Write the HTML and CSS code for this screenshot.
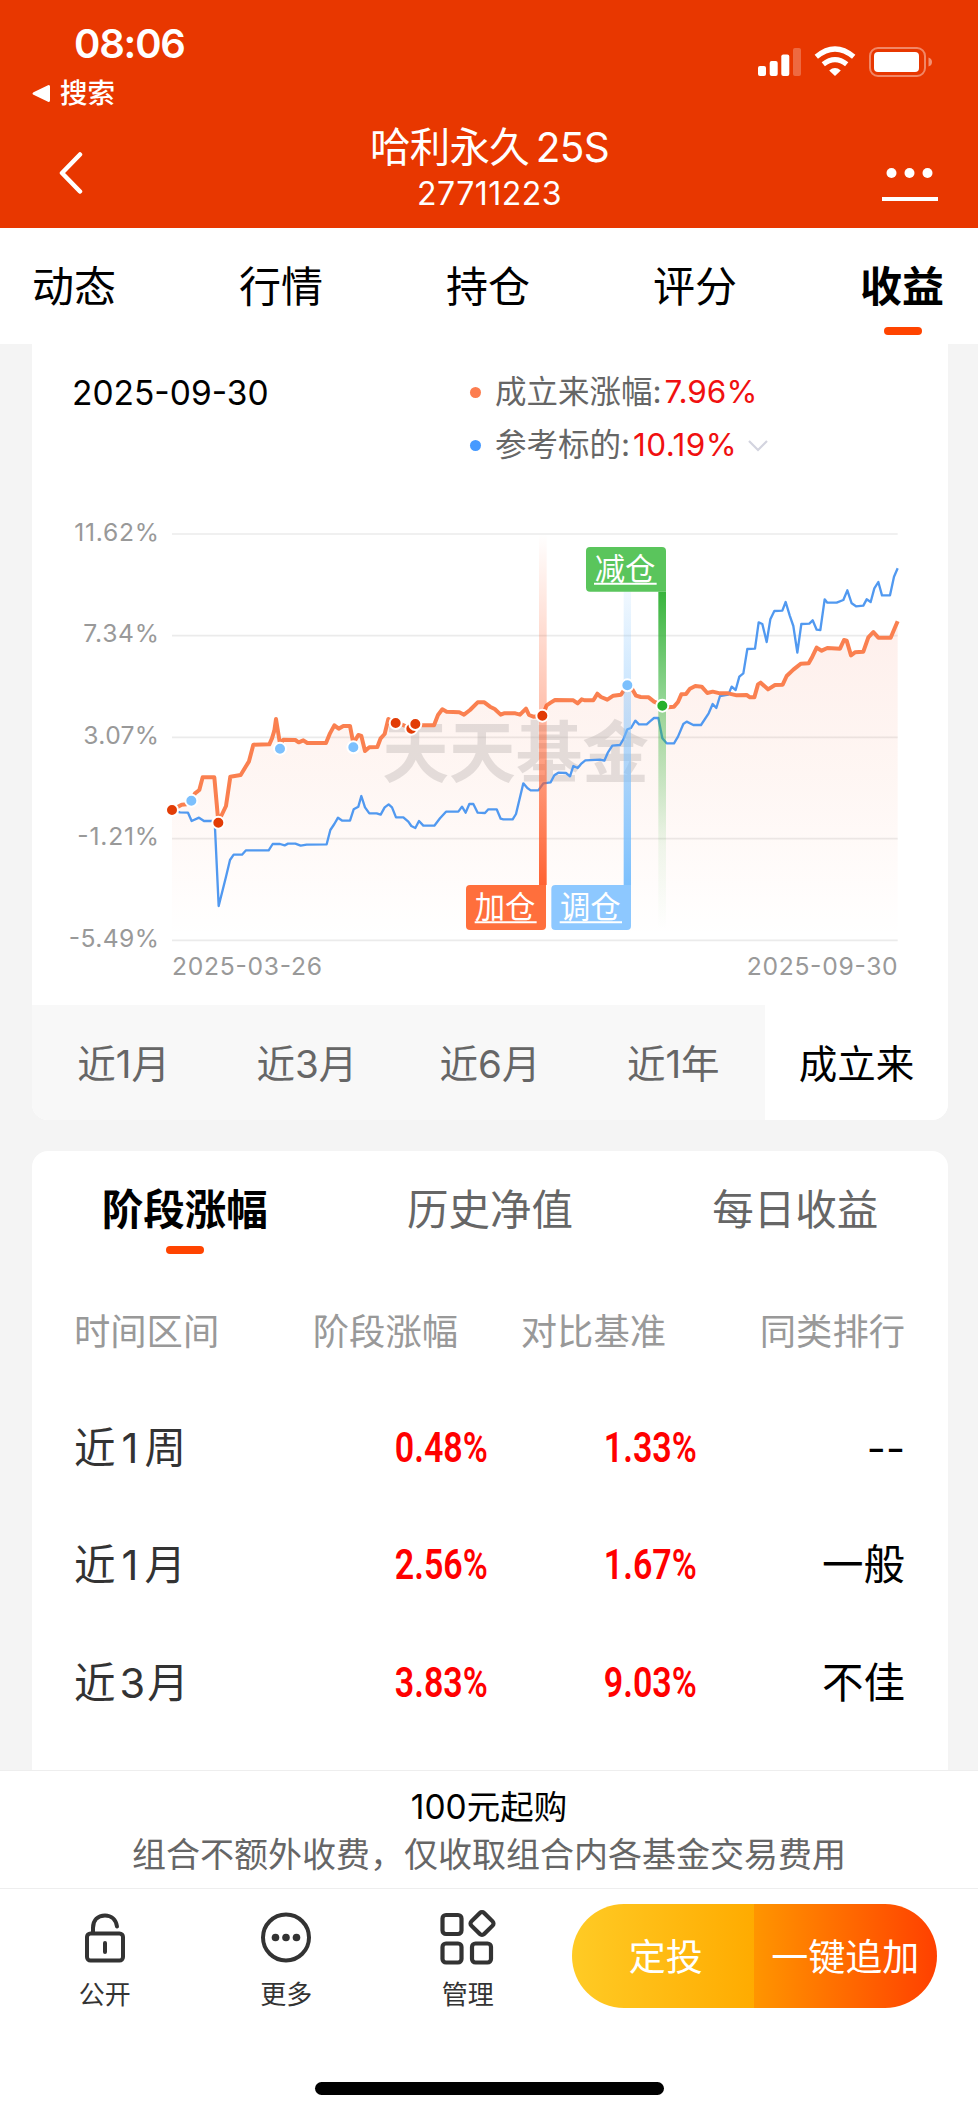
FILE: index.html
```html
<!DOCTYPE html>
<html lang="zh-CN">
<head>
    <meta charset="UTF-8">
    <meta name="viewport" content="width=device-width, initial-scale=1.0">
    <title>哈利永久 25S</title>
    <link rel="stylesheet" href="styles.css">
</head>
<body>
    <header class="header">
        <div class="status">
            <div class="status-left">
                <div class="time">08:06</div>
                <div class="back-app">
                    <svg width="19" height="19" viewBox="0 0 19 19"><path d="M1.5 8.2 16 1.2q2-.8 2 1.3v14q0 2-2 1.3L1.5 10.8q-2-1.3 0-2.6z" fill="#fff"/></svg>
                    <span>搜索</span>
                </div>
            </div>
            <svg class="status-icons" width="176" height="32" viewBox="757 45 176 32">
                <g fill="#fff">
                    <rect x="758" y="66" width="8" height="10" rx="2"/>
                    <rect x="769.7" y="61" width="8" height="15" rx="2"/>
                    <rect x="781.3" y="54.5" width="8" height="21.5" rx="2"/>
                    <rect x="793" y="48" width="8" height="28" rx="2" opacity=".25"/>
                    <path d="M835 76l-5.8-5.6q5.8-4.6 11.6 0z"/>
                </g>
                <g fill="none" stroke="#fff" stroke-width="5.2">
                    <path d="M816.3 56.8q18.7-15.6 37.4 0"/>
                    <path d="M823.3 64.3q11.7-9.4 23.4 0"/>
                </g>
                <rect x="870" y="48" width="55" height="28" rx="8" fill="none" stroke="#fff" stroke-width="2" opacity=".4"/>
                <rect x="874" y="52" width="45" height="20" rx="4" fill="#fff"/>
                <path d="M928.5 57.5q3.5 1 3.5 4.5t-3.5 4.5z" fill="#fff" opacity=".45"/>
            </svg>
        </div>
        <div class="nav">
            <svg class="nav-back" width="26" height="44" viewBox="0 0 26 44"><path d="M21 3.5 3 22l18 18.5" fill="none" stroke="#fff" stroke-width="4.5" stroke-linecap="round" stroke-linejoin="round"/></svg>
            <div class="nav-title">
                <div class="title">哈利永久 25S</div>
                <div class="code">27711223</div>
            </div>
            <svg class="nav-more" width="56" height="36" viewBox="0 0 56 36" fill="#fff">
                <circle cx="9.5" cy="7" r="5"/>
                <circle cx="27.5" cy="7" r="5"/>
                <circle cx="45.5" cy="7" r="5"/>
                <rect x="0" y="31" width="56" height="4"/>
            </svg>
        </div>
    </header>

    <nav class="tabs">
        <div class="tab">动态</div>
        <div class="tab">行情</div>
        <div class="tab">持仓</div>
        <div class="tab">评分</div>
        <div class="tab active">收益</div>
    </nav>

    <main class="content">
        <section class="card chart-card">
            <div class="info">
                <div class="date">2025-09-30</div>
                <div class="legend">
                    <div class="legend-row"><i class="dot orange"></i><span>成立来涨幅:</span><b>7.96%</b></div>
                    <div class="legend-row"><i class="dot blue"></i><span>参考标的:</span><b class="ref">10.19%</b>
                        <svg width="20" height="12" viewBox="0 0 20 12"><path d="M1 1l9 9 9-9" fill="none" stroke="#d3d4df" stroke-width="2.2"/></svg>
                    </div>
                </div>
            </div>
            <!-- chart units are a third of a pixel -->
            <svg class="chart" width="915" height="485" viewBox="-354 -60 2745 1455">
                <defs>
                    <linearGradient id="area" x1="0" y1="0" x2="0" y2="1">
                        <stop offset="0" stop-color="#f4502a" stop-opacity=".09"/>
                        <stop offset=".5" stop-color="#f4602a" stop-opacity=".055"/>
                        <stop offset="1" stop-color="#ff5a28" stop-opacity="0"/>
                    </linearGradient>
                    <linearGradient id="add" x1="0" y1="0" x2="0" y2="1">
                        <stop offset="0" stop-color="#ff5a28" stop-opacity="0"/>
                        <stop offset=".5" stop-color="#ff5a28" stop-opacity=".38"/>
                        <stop offset="1" stop-color="#ff5a28" stop-opacity=".95"/>
                    </linearGradient>
                    <linearGradient id="move" x1="0" y1="0" x2="0" y2="1">
                        <stop offset="0" stop-color="#7cc0fd" stop-opacity=".05"/>
                        <stop offset=".5" stop-color="#7cc0fd" stop-opacity=".5"/>
                        <stop offset="1" stop-color="#7cc0fd"/>
                    </linearGradient>
                    <linearGradient id="cut" x1="0" y1="0" x2="0" y2="1">
                        <stop offset="0" stop-color="#38b43c"/>
                        <stop offset=".35" stop-color="#38b43c" stop-opacity=".5"/>
                        <stop offset=".75" stop-color="#38b43c" stop-opacity=".08"/>
                        <stop offset="1" stop-color="#38b43c" stop-opacity="0"/>
                    </linearGradient>
                </defs>
                <g stroke="#ebebeb" stroke-width="5">
                    <path d="M66 42H2243M66 347H2243M66 652H2243M66 956H2243M66 1261H2243"/>
                </g>
                <g class="axis">
                    <text x="-227" y="62" textLength="254">11.62%</text>
                    <text x="-200" y="367" textLength="227">7.34%</text>
                    <text x="-200" y="672" textLength="227">3.07%</text>
                    <text x="-218" y="976" textLength="245">-1.21%</text>
                    <text x="-244" y="1281" textLength="271">-5.49%</text>
                    <text x="66" y="1364" textLength="450">2025-03-26</text>
                    <text x="1790" y="1364" textLength="453">2025-09-30</text>
                </g>
                <path fill="url(#area)" d="M66 1250V870L95 854 124 841 148 810 158 772 193 772 205 906 228 858 241 770 272 765 297 724 310 674 358 673 380 596 390 672 400 659 436 660 528 669 553 616 600 618 610 670 634 648 645 693 682 681 704 642 715 597 737 608 784 626 852 616 877 568 942 584 983 547 1003 547 1052 584 1110 584 1128 566 1142 588 1178 587 1190 556 1215 540 1330 541 1342 521 1372 539 1413 524 1432 496 1458 527 1496 532 1537 556 1572 560 1594 523 1608 522 1636 498 1655 500 1672 519 1800 532 1813 532 1832 488 1854 508 1898 494 1930 449 1976 430 2000 383 2070 386 2090 362 2103 406 2140 395 2170 336 2185 353 2222 353 2243 304V1250z"/>
                <text class="watermark" x="697" y="770" textLength="800">天天基金</text>
                <polyline class="line-ref" points="66,870 90,877 114,878 125,903 147,893 162,903 194,903 206,1158 228,1070 240,1020 251,1004 276,1004 288,991 356,991 368,972 390,972 404,976 414,971 436,971 452,977 470,974 530,973 541,930 553,912 564,893 577,902 600,902 611,868 625,860 634,828 645,862 658,880 680,880 692,884 704,862 716,853 726,862 738,892 760,892 775,905 784,918 796,924 807,903 820,917 853,917 870,895 888,875 925,875 936,860 947,878 958,852 970,852 983,878 1005,879 1015,868 1040,868 1052,896 1060,898 1088,898 1098,882 1108,840 1120,790 1132,804 1142,811 1165,811 1180,790 1202,787 1213,766 1225,758 1248,759 1260,769 1270,738 1283,744 1295,730 1306,721 1350,719 1363,722 1374,697 1387,677 1410,675 1420,658 1432,628 1443,624 1456,602 1467,613 1490,613 1500,604 1512,594 1525,594 1537,655 1550,670 1572,670 1584,650 1600,612 1610,605 1630,615 1653,615 1676,580 1688,552 1699,564 1710,528 1735,524 1745,500 1757,510 1768,470 1780,460 1792,387 1815,386 1826,307 1837,312 1850,366 1861,298 1873,273 1897,272 1907,246 1919,286 1930,318 1942,398 1954,312 1978,311 1988,301 2000,329 2011,330 2024,238 2032,248 2060,248 2080,240 2092,211 2105,250 2118,259 2140,257 2150,238 2162,246 2173,205 2185,186 2196,226 2220,226 2232,170 2243,145"/>
                <polyline class="line-main" points="66,870 84,860 95,854 110,853 124,841 135,820 148,810 158,772 193,772 205,906 228,858 241,770 272,765 287,740 297,724 310,674 358,673 366,655 373,632 378,597 390,672 400,659 436,660 446,667 460,661 472,669 528,669 540,640 553,616 566,626 580,618 600,618 610,670 625,645 634,648 645,693 658,682 682,681 692,655 704,642 715,597 737,608 752,612 784,626 796,612 810,616 852,616 864,585 877,568 890,575 928,577 942,584 960,570 983,547 1003,547 1020,560 1034,567 1052,584 1062,580 1096,580 1110,584 1128,566 1137,585 1150,590 1178,587 1190,556 1202,548 1215,540 1270,541 1283,550 1295,538 1305,541 1330,541 1342,521 1353,531 1372,539 1390,527 1413,524 1432,496 1446,506 1458,527 1472,531 1496,532 1512,545 1537,556 1555,562 1572,560 1584,546 1594,523 1608,522 1620,506 1636,498 1655,500 1672,519 1688,515 1710,520 1735,520 1760,526 1790,525 1800,532 1813,532 1824,493 1832,488 1854,508 1875,495 1898,494 1910,468 1930,449 1953,431 1976,430 1987,410 2000,383 2015,392 2032,384 2070,386 2082,360 2090,362 2103,406 2115,397 2140,395 2155,352 2170,336 2185,353 2222,353 2234,325 2243,304"/>

                <rect x="1167" y="42" width="23" height="1053" fill="url(#add)"/>
                <rect x="1421" y="150" width="22" height="945" fill="url(#move)"/>
                <rect x="1525" y="215" width="23" height="1015" fill="url(#cut)"/>

                <path d="M960 1095H1188V1218a12 12 0 0 1-12 12H960a12 12 0 0 1-12-12V1107a12 12 0 0 1 12-12z" fill="#ff6f3c"/>
                <path d="M1216 1095H1443V1218a12 12 0 0 1-12 12H1216a12 12 0 0 1-12-12V1107a12 12 0 0 1 12-12z" fill="#8dc8ff"/>
                <path d="M1320 81H1536a12 12 0 0 1 12 12V215H1320a12 12 0 0 1-12-12V93a12 12 0 0 1 12-12z" fill="#5ac55c"/>
                <g class="flag">
                    <text x="974" y="1194">加仓</text>
                    <text x="1230" y="1194">调仓</text>
                    <text x="1334" y="179">减仓</text>
                    <path d="M974 1207H1160M1229 1207H1416M1332 191H1520" stroke="#fff" stroke-width="6"/>
                </g>

                <g stroke="#fff" stroke-width="6">
                    <g fill="#e23c06">
                        <circle cx="66" cy="870" r="18"/>
                        <circle cx="205" cy="908" r="18"/>
                        <circle cx="737" cy="609" r="18"/>
                        <circle cx="784" cy="626" r="18"/>
                        <circle cx="796" cy="612" r="18"/>
                        <circle cx="1177" cy="587" r="18"/>
                    </g>
                    <g fill="#7cc0fd">
                        <circle cx="124" cy="842" r="18"/>
                        <circle cx="390" cy="686" r="18"/>
                        <circle cx="610" cy="682" r="18"/>
                        <circle cx="1432" cy="496" r="18"/>
                    </g>
                    <circle cx="1537" cy="557" r="18" fill="#27b02b"/>
                </g>
            </svg>
            <div class="periods">
                <div class="period">近1月</div>
                <div class="period">近3月</div>
                <div class="period">近6月</div>
                <div class="period">近1年</div>
                <div class="period active">成立来</div>
            </div>
        </section>

        <section class="card table-card">
            <div class="subtabs">
                <div class="subtab active">阶段涨幅</div>
                <div class="subtab">历史净值</div>
                <div class="subtab">每日收益</div>
            </div>
            <div class="row head">
                <div>时间区间</div>
                <div>阶段涨幅</div>
                <div>对比基准</div>
                <div>同类排行</div>
            </div>
            <div class="row">
                <div class="range">近<span>1</span>周</div>
                <div class="num"><span>0.48%</span></div>
                <div class="num"><span>1.33%</span></div>
                <div>--</div>
            </div>
            <div class="row">
                <div class="range">近<span>1</span>月</div>
                <div class="num"><span>2.56%</span></div>
                <div class="num"><span>1.67%</span></div>
                <div>一般</div>
            </div>
            <div class="row">
                <div class="range">近<span class="wide">3</span>月</div>
                <div class="num"><span>3.83%</span></div>
                <div class="num"><span>9.03%</span></div>
                <div>不佳</div>
            </div>
        </section>
    </main>

    <footer class="footer">
        <div class="notice">
            <div class="notice-title">100元起购</div>
            <div class="notice-text">组合不额外收费，仅收取组合内各基金交易费用</div>
        </div>
        <div class="toolbar">
            <div class="tool">
                <svg width="56" height="56" viewBox="0 0 56 56" fill="none" stroke="#333" stroke-width="4" stroke-linecap="round">
                    <rect x="10" y="24.5" width="36" height="27" rx="3.5"/>
                    <path d="M16 24v-5C16 11 21 6.5 28 6.5c6.5 0 11 4.5 12 11M28 34v9"/>
                </svg>
                <span>公开</span>
            </div>
            <div class="tool">
                <svg width="56" height="56" viewBox="0 0 56 56" fill="#333">
                    <circle cx="28" cy="28.5" r="23" fill="none" stroke="#333" stroke-width="4"/>
                    <circle cx="17.5" cy="28.5" r="3.8"/>
                    <circle cx="28" cy="28.5" r="3.8"/>
                    <circle cx="38.5" cy="28.5" r="3.8"/>
                </svg>
                <span>更多</span>
            </div>
            <div class="tool">
                <svg width="56" height="56" viewBox="0 0 56 56" fill="none" stroke="#333" stroke-width="4.2" stroke-linejoin="round">
                    <rect x="2.5" y="6" width="19" height="19" rx="3.5"/>
                    <rect x="2.5" y="34.5" width="19" height="19" rx="3.5"/>
                    <rect x="32" y="34.5" width="19" height="19" rx="3.5"/>
                    <rect x="33" y="5.5" width="18" height="18" rx="3" transform="rotate(45 42 14.5)"/>
                </svg>
                <span>管理</span>
            </div>
            <div class="actions">
                <div class="action invest">定投</div>
                <div class="action append">一键追加</div>
            </div>
        </div>
        <div class="home-bar"></div>
    </footer>
</body>
</html>
```

FILE: styles.css
```css
html, body {
    margin: 0;
    height: 100%;
}

body {
    display: flex;
    flex-direction: column;
    height: 2117px;
    overflow: hidden;
    background: #f4f4f4;
    color: #000;
    font-family: Inter, "Noto Sans CJK SC", sans-serif;
}

svg {
    display: block;
    flex-shrink: 0;
}

.header {
    height: 228px;
    flex-shrink: 0;
    background: #e83700;
    color: #fff;
}

.status {
    display: flex;
    justify-content: space-between;
    height: 118px;
    padding: 0 45px 0 32px;
}

.time {
    margin: 19px 0 0 42px;
    font-size: 40px;
    font-weight: 600;
    line-height: 50px;
    letter-spacing: -1.2px;
}

.back-app {
    display: flex;
    align-items: center;
    gap: 9px;
    margin-top: 9px;
    font-size: 27.5px;
    font-weight: 500;
    line-height: 30px;
}

.status-icons {
    margin-top: 45px;
}

.nav {
    display: flex;
    justify-content: space-between;
    padding: 0 40px 0 59px;
}

.nav-back {
    margin-top: 33px;
}

.nav-title {
    margin-top: 5px;
    padding-left: 12px;
    text-align: center;
}

.title {
    font-size: 40.5px;
    line-height: 50px;
    letter-spacing: -0.7px;
    word-spacing: -4px;
}

.code {
    margin-top: 3px;
    font-size: 32px;
    line-height: 36px;
    letter-spacing: 0.5px;
}

.nav-more {
    margin-top: 48px;
}

.tabs {
    display: flex;
    justify-content: space-between;
    flex-shrink: 0;
    height: 116px;
    padding: 0 34px 0 32px;
    background: #fff;
    font-size: 42px;
    line-height: 118px;
}

.tab.active {
    position: relative;
    font-weight: bold;
}

.tab.active::after,
.subtab.active::after {
    content: "";
    position: absolute;
    left: 50%;
    width: 38px;
    height: 8px;
    margin-left: -19px;
    border-radius: 4px;
    background: #ff4400;
}

.tab.active::after {
    top: 99px;
    margin-left: -18px;
}

.content {
    flex: 1;
    min-height: 0;
    overflow: hidden;
    padding: 0 30px 0 32px;
}

.card {
    background: #fff;
    overflow: hidden;
}

.chart-card {
    height: 776px;
    border-radius: 0 0 16px 16px;
}

.info {
    display: flex;
    height: 156px;
    padding: 0 40px;
}

.date {
    width: 398px;
    padding-top: 24px;
    font-size: 33.5px;
    line-height: 50px;
}

.legend {
    padding-top: 22px;
}

.legend-row {
    display: flex;
    align-items: center;
    height: 53px;
    color: #666;
    font-size: 31.5px;
    line-height: 40px;
}

.legend-row span {
    padding-bottom: 2px;
}

.legend-row b {
    margin-left: 3px;
    padding-bottom: 2px;
    color: #f01010;
    font-weight: 400;
}

.legend-row .ref {
    margin-right: 11px;
    letter-spacing: 0.4px;
}

.dot {
    width: 11px;
    height: 11px;
    margin-right: 14px;
    border-radius: 50%;
}

.orange {
    background: #fc7d4f;
}

.blue {
    background: #469aff;
}

.chart text {
    font-family: Inter, "Noto Sans CJK SC", sans-serif;
}

.axis text {
    font-size: 74px;
    fill: #999;
}

.chart .watermark {
    font-family: "Noto Sans CJK SC", sans-serif;
    font-size: 200px;
    font-weight: bold;
    fill: #b9b2b0;
    opacity: 0.38;
}

.line-ref {
    fill: none;
    stroke: #5199f0;
    stroke-width: 7;
    stroke-linejoin: round;
}

.line-main {
    fill: none;
    stroke: #fa8050;
    stroke-width: 12;
    stroke-linejoin: round;
}

.flag text {
    font-size: 91px;
    fill: #fff;
}

.periods {
    display: flex;
    height: 115px;
    margin-top: 20px;
    background: #f8f8f8;
}

.period {
    flex: 1;
    color: #666;
    font-size: 38.5px;
    line-height: 118px;
    text-align: center;
}

.period.active {
    background: #fff;
    color: #000;
}

.table-card {
    height: 640px;
    margin-top: 31px;
    border-radius: 16px 16px 0 0;
}

.subtabs {
    display: flex;
    height: 121px;
}

.subtab {
    position: relative;
    flex: 1;
    color: #666;
    font-size: 41.5px;
    line-height: 118px;
    text-align: center;
}

.subtab.active {
    color: #000;
    font-weight: bold;
}

.subtab.active::after {
    top: 95px;
}

.row {
    display: grid;
    grid-template-columns: 200px 214px 209px 208px;
    height: 117.5px;
    padding: 0 43px 0 42px;
    font-size: 41.5px;
    line-height: 117.5px;
    text-align: right;
}

.row > :first-child {
    text-align: left;
}

.head {
    grid-template-columns: 200px 184px 208px 239px;
    color: #999;
    font-size: 36.3px;
    line-height: 120px;
}

.range {
    color: #333;
}

.range span {
    padding: 0 6px;
}

.range .wide {
    padding: 0 2px 0 4px;
}

.num {
    color: #f00;
    font-family: Roboto, sans-serif;
    font-size: 42px;
    font-weight: 600;
    line-height: 116px;
}

.num span {
    display: inline-block;
    transform: scaleX(0.81);
    transform-origin: right;
}

.footer {
    flex-shrink: 0;
    height: 347px;
    background: #fff;
}

.notice {
    box-sizing: border-box;
    height: 119px;
    padding-top: 12px;
    border-top: 1px solid #eee;
    border-bottom: 1px solid #eee;
    font-size: 34px;
    line-height: 48px;
    text-align: center;
}

.notice-title {
    font-size: 33.5px;
}

.notice-text {
    color: #666;
}

.toolbar {
    display: flex;
    height: 193px;
    padding-left: 14px;
}

.tool {
    display: flex;
    flex-direction: column;
    align-items: center;
    width: 181.5px;
    padding-top: 20px;
    color: #333;
    font-size: 26px;
    line-height: 59px;
}

.actions {
    display: flex;
    width: 365px;
    height: 104px;
    margin: 15px 0 0 13px;
    border-radius: 52px;
    overflow: hidden;
    color: #fff;
    font-size: 37px;
    line-height: 107px;
    text-align: center;
}

.action {
    width: 183px;
}

.invest {
    box-sizing: border-box;
    padding-left: 6px;
    background: linear-gradient(90deg, #ffcb25, #ffab00);
}

.append {
    background: linear-gradient(90deg, #ff9500, #ff4000);
}

.home-bar {
    width: 349px;
    height: 13px;
    margin: 0 auto;
    border-radius: 7px;
    background: #000;
}
```
